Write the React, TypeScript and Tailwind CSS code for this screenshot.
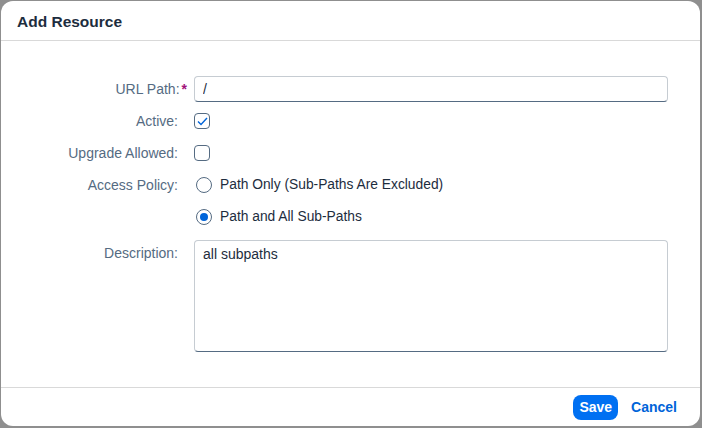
import { useState } from "react";

export default function App() {
  const [path, setPath] = useState("/");
  const [active, setActive] = useState(true);
  const [upgrade, setUpgrade] = useState(false);
  const [policy, setPolicy] = useState("all");
  const [desc, setDesc] = useState("all subpaths");

  const label = "text-right text-[14px] text-[#556b82] pr-4";

  return (
    <div
      className="w-[702px] h-[428px] bg-[#8f8f8f] pt-px pl-px pr-[2px] pb-[2px]"
      style={{ fontFamily: '"Liberation Sans", Arial, sans-serif' }}
    >
      <div className="h-full rounded-[12px] bg-white flex flex-col overflow-hidden">
        <div className="h-[40px] shrink-0 border-b border-[#d9d9d9] flex items-center px-4 pt-[2px]">
          <h1 className="text-[15.5px] font-bold text-[#1d2d3e]">Add Resource</h1>
        </div>

        <div className="flex-1 pt-8 pr-[32px]">
          <div className="grid grid-cols-[193px_1fr] items-center">
            <div className={label + " pr-[7px]"}>
              URL Path:<span className="text-[#a1127a] font-bold ml-[2px]">*</span>
            </div>
            <div className="h-8 flex items-center">
              <input
                className="w-full h-[26px] rounded-[4px] border border-[#c6ccd2] border-b-[#556b82] px-2 text-[14px] text-[#1d2d3e] outline-none"
                value={path}
                onChange={(e) => setPath(e.target.value)}
              />
            </div>

            <div className={label}>Active:</div>
            <div className="h-8 flex items-center">
              <button
                onClick={() => setActive(!active)}
                className="w-4 h-4 rounded-[4px] border border-[#556b82] flex items-center justify-center"
              >
                {active && (
                  <svg width="11" height="9" viewBox="0 0 11 9" fill="none">
                    <path d="M1 4.5 L4 7.5 L10 1" stroke="#0064d9" strokeWidth="1.4" />
                  </svg>
                )}
              </button>
            </div>

            <div className={label}>Upgrade Allowed:</div>
            <div className="h-8 flex items-center">
              <button
                onClick={() => setUpgrade(!upgrade)}
                className="w-4 h-4 rounded-[4px] border border-[#556b82] flex items-center justify-center"
              >
                {upgrade && (
                  <svg width="11" height="9" viewBox="0 0 11 9" fill="none">
                    <path d="M1 4.5 L4 7.5 L10 1" stroke="#0064d9" strokeWidth="1.4" />
                  </svg>
                )}
              </button>
            </div>

            <div className={label}>Access Policy:</div>
            <div className="h-8 flex items-center">
              <button onClick={() => setPolicy("only")} className="flex items-center gap-2 pl-[2px]">
                <span className="w-4 h-4 rounded-full border border-[#556b82] flex items-center justify-center">
                  {policy === "only" && <span className="w-2 h-2 rounded-full bg-[#0064d9]" />}
                </span>
                <span className="text-[13.8px] text-[#1d2d3e]">Path Only (Sub-Paths Are Excluded)</span>
              </button>
            </div>

            <div />
            <div className="h-8 flex items-center">
              <button onClick={() => setPolicy("all")} className="flex items-center gap-2 pl-[2px]">
                <span className="w-4 h-4 rounded-full border border-[#556b82] flex items-center justify-center">
                  {policy === "all" && <span className="w-2 h-2 rounded-full bg-[#0064d9]" />}
                </span>
                <span className="text-[13.8px] text-[#1d2d3e]">Path and All Sub-Paths</span>
              </button>
            </div>

            <div className={label + " self-start pt-[10px]"}>Description:</div>
            <div className="mt-[7px]">
              <textarea
                className="block w-full h-[112px] rounded-[4px] border border-[#c6ccd2] border-b-[#556b82] px-2 py-[3px] text-[14px] text-[#1d2d3e] outline-none resize-none"
                value={desc}
                onChange={(e) => setDesc(e.target.value)}
              />
            </div>
          </div>
        </div>

        <div className="h-[39px] shrink-0 border-t border-[#d9d9d9] flex items-center justify-end gap-[4px] pr-[14px]">
          <button className="h-[25px] px-[6px] rounded-[8px] bg-[#0070f2] text-white text-[14px] font-bold">
            Save
          </button>
          <button className="h-[25px] px-[9px] text-[#0064d9] text-[14px] font-bold">Cancel</button>
        </div>
      </div>
    </div>
  );
}
